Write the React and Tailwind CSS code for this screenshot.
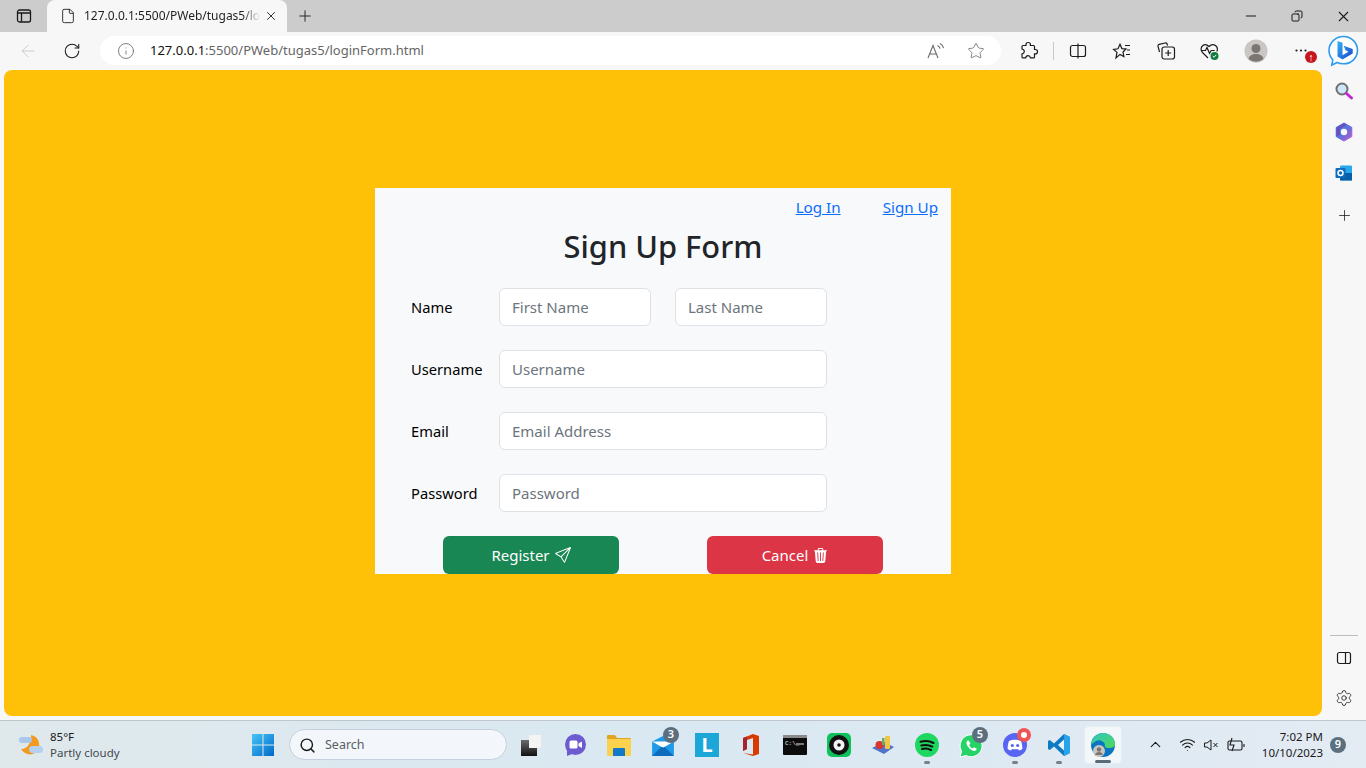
import { BsSend, BsTrash3Fill } from "react-icons/bs";
import {
  ArrowLeft,
  RotateCw,
  Info,
  Star,
  Plus,
  Minus,
  X,
  Copy,
  Settings,
  ChevronUp,
  Wifi,
  Search,
  File,
} from "lucide-react";

function ToolIcon({ className = "", children }) {
  return <div className={`flex shrink-0 items-center justify-center ${className}`}>{children}</div>;
}

function Badge({ children, className = "" }) {
  return (
    <span className={`absolute flex items-center justify-center rounded-full text-[11px] font-semibold text-white ${className}`}>
      {children}
    </span>
  );
}

function Field({ label, children }) {
  return (
    <div className="flex items-center">
      <label className="w-[88px] text-[14.7px] text-black">{label}</label>
      {children}
    </div>
  );
}

function TextInput({ placeholder, className = "w-[328px]" }) {
  return (
    <input
      placeholder={placeholder}
      className={`h-[38px] rounded-md border border-[#dee2e6] bg-white px-3 text-[15px] outline-none placeholder:text-[#6c757d] ${className}`}
    />
  );
}

function ReadAloud() {
  return (
    <svg width="20" height="20" viewBox="0 0 20 20" fill="none" stroke="#6b6b6b" strokeWidth="1.1">
      <path d="M2 17 7 4.500 12 17M3.800 13h6.400" />
      <path d="M11.500 4.500c1.500.7 2.300 1.800 2.600 3.200M14 2.500c2 1 3.200 2.600 3.600 4.700" />
    </svg>
  );
}

function Extensions() {
  return (
    <svg width="20" height="20" viewBox="0 0 20 20" fill="none" stroke="#1c1c1c" strokeWidth="1.2">
      <path d="M7 3.500c0-1.200 1-2 2.200-2s2.200.8 2.200 2v1h3.100a1 1 0 0 1 1 1v3h1c1.200 0 2 1 2 2.200s-.8 2.200-2 2.200h-1v3a1 1 0 0 1-1 1h-3c-.3-1.500-1.300-2.300-2.400-2.300s-2.200.8-2.400 2.300H4a1 1 0 0 1-1-1v-3c1.500-.3 2.300-1.300 2.300-2.400S4.500 8.300 3 8V5.500a1 1 0 0 1 1-1h3Z" />
    </svg>
  );
}

function SplitScreen() {
  return (
    <svg width="18" height="18" viewBox="0 0 18 18" fill="none" stroke="#1c1c1c" strokeWidth="1.2">
      <rect x="1.500" y="3.500" width="15" height="11" rx="2" />
      <path d="M9 1.500v15" />
    </svg>
  );
}

function Favorites() {
  return (
    <svg width="20" height="20" viewBox="0 0 20 20" fill="none" stroke="#1c1c1c" strokeWidth="1.2">
      <path d="M8 3.200 9.900 7.600 14 8 11 11l.9 4.600L8 13.400 4 17l1-5.600L1.600 8.400 6 7.800Z" />
      <path d="M13 4.500h5M15 9h3M14 13.500h4" />
    </svg>
  );
}

function Collections() {
  return (
    <svg width="20" height="20" viewBox="0 0 20 20" fill="none" stroke="#1c1c1c" strokeWidth="1.2">
      <path d="M3.500 11 2 5.200c-.2-.9.3-1.600 1.100-1.800l6-1.400c1-.2 1.700.2 2 1l.4 1.500" />
      <rect x="6" y="6" width="12.500" height="12" rx="2.200" />
      <path d="M12.200 9v6M9.200 12h6" />
    </svg>
  );
}

function Health() {
  return (
    <svg width="22" height="22" viewBox="0 0 22 22" fill="none">
      <path
        d="M9 18 3.500 12.500C1.500 10.500 1.700 7.400 3.600 5.800 5.500 4.200 8 4.500 10 6.500c2-2 4.800-2.300 6.700-.7 1.800 1.500 2 3.800 1.200 5.700"
        stroke="#1c1c1c"
        strokeWidth="1.2"
      />
      <path d="M2.500 10.500h4l1.500-3 2.500 6 1.700-3h3.500" stroke="#1c1c1c" strokeWidth="1.200" />
      <circle cx="15.500" cy="16" r="4" fill="#107c41" />
      <path d="m13.700 16 1.300 1.300 2.200-2.400" stroke="#fff" strokeWidth="1" />
    </svg>
  );
}

function Profile() {
  return (
    <svg width="24" height="24" viewBox="0 0 24 24">
      <circle cx="12" cy="12" r="11.500" fill="#c9c6c3" />
      <circle cx="12" cy="9.500" r="4.500" fill="#7b7672" />
      <path d="M4.500 20c.8-3.500 3.600-5 7.500-5s6.700 1.500 7.500 5a11.500 11.500 0 0 1-15 0Z" fill="#7b7672" />
    </svg>
  );
}

function Bing() {
  return (
    <svg width="32" height="32" viewBox="0 0 32 32">
      <defs>
        <linearGradient id="bingB" x1="0" y1="0" x2="1" y2="1">
          <stop offset="0" stopColor="#33b4f5" />
          <stop offset="1" stopColor="#1a45d0" />
        </linearGradient>
      </defs>
      <path
        d="M16.500 1.500C8.500 1.500 2 7.700 2 15.300c0 3.700 1.400 7 3.800 9.500L4.800 30l5.400-2.500c1.900.9 4 1.300 6.300 1.300 8 0 14-6.100 14-13.500S24.500 1.500 16.500 1.500Z"
        fill="#fff"
        stroke="#2b9cf0"
        strokeWidth="1.600"
      />
      <path d="M10.500 6l5 1.700v12.500l6-3.400-3-1.500-1.800-4.600 9 3.200v4.600l-10.200 6-5-2.900Z" fill="url(#bingB)" />
    </svg>
  );
}

function TitleBar() {
  return (
    <div className="flex h-8 shrink-0 items-end bg-[#cccccc]">
      <ToolIcon className="h-8 w-[47px]">
        <svg width="16" height="16" viewBox="0 0 16 16" fill="none" stroke="#1a1a1a" strokeWidth="1.300">
          <rect x="1.500" y="2" width="13" height="12" rx="2" />
          <path d="M1.500 5h13M5.500 5v9" />
        </svg>
      </ToolIcon>
      <div className="flex h-8 w-[240px] shrink-0 items-center rounded-t-lg bg-[#f7f7f7] pl-[13px]">
        <File size={16} strokeWidth={1.300} color="#1a1a1a" className="shrink-0" />
        <div className="ml-2 w-[176px] shrink-0 overflow-hidden whitespace-nowrap text-[12px] text-[#1f1f1f] [mask-image:linear-gradient(to_right,black_90%,transparent)]">
          127.0.0.1:5500/PWeb/tugas5/loginForm.html
        </div>
        <X size={14} strokeWidth={1.500} color="#1a1a1a" className="ml-1 shrink-0" />
      </div>
      <ToolIcon className="h-8 w-[36px]">
        <Plus size={18} strokeWidth={1.200} color="#1a1a1a" />
      </ToolIcon>
      <div className="ml-auto flex h-8 items-center">
        <ToolIcon className="w-[46px]">
          <Minus size={16} strokeWidth={1.500} color="#1a1a1a" />
        </ToolIcon>
        <ToolIcon className="w-[46px]">
          <Copy size={12} strokeWidth={2} color="#1a1a1a" className="-scale-x-100" />
        </ToolIcon>
        <ToolIcon className="w-[46px]">
          <X size={17} strokeWidth={1.500} color="#1a1a1a" />
        </ToolIcon>
      </div>
    </div>
  );
}

function Toolbar() {
  return (
    <div className="flex h-9 shrink-0 items-center bg-[#f7f7f7] pt-px">
      <ToolIcon className="ml-[6px] w-[44px]">
        <ArrowLeft size={20} strokeWidth={1} color="#c4c4c4" />
      </ToolIcon>
      <ToolIcon className="w-[44px]">
        <RotateCw size={18} strokeWidth={1.400} color="#1a1a1a" />
      </ToolIcon>
      <div className="ml-[6px] flex h-[29px] w-[901px] shrink-0 items-center rounded-full bg-white pl-[17px]">
        <Info size={18} strokeWidth={1.100} color="#666666" />
        <span className="ml-[15px] text-[13px] text-[#666666]">
          <span className="text-[#111111]">127.0.0.1</span>:5500/PWeb/tugas5/loginForm.html
        </span>
        <ToolIcon className="ml-auto w-[40px]">
          <ReadAloud />
        </ToolIcon>
        <ToolIcon className="mr-[5px] w-[40px]">
          <Star size={18} strokeWidth={1.100} color="#6b6b6b" />
        </ToolIcon>
      </div>
      <ToolIcon className="ml-[6px] w-[44px]">
        <Extensions />
      </ToolIcon>
      <div className="ml-[2px] h-[18px] w-px shrink-0 bg-[#c8c8c8]" />
      <ToolIcon className="ml-[2px] w-[44px]">
        <SplitScreen />
      </ToolIcon>
      <ToolIcon className="w-[44px]">
        <Favorites />
      </ToolIcon>
      <ToolIcon className="w-[44px]">
        <Collections />
      </ToolIcon>
      <ToolIcon className="w-[44px]">
        <Health />
      </ToolIcon>
      <ToolIcon className="w-[48px]">
        <Profile />
      </ToolIcon>
      <div className="relative flex h-full w-[40px] shrink-0 items-center justify-center">
        <svg width="12" height="3" viewBox="0 0 12 3" fill="#1c1c1c" className="ml-px">
          <circle cx="1.500" cy="1.500" r="1.100" />
          <circle cx="6" cy="1.500" r="1.100" />
          <circle cx="10.500" cy="1.500" r="1.100" />
        </svg>
        <Badge className="right-[3px] top-[18px] h-3 w-3 bg-[#c4161c] text-[9px] font-bold">↑</Badge>
      </div>
      <ToolIcon className="w-[46px]">
        <Bing />
      </ToolIcon>
    </div>
  );
}

function Form() {
  return (
    <div className="flex h-[386px] w-[576px] flex-col bg-[#f8f9fa] px-9 pt-[7px]">
      <div className="-mr-[23px] flex justify-end gap-[42px] text-[15.200px] leading-6 text-[#0d6efd]">
        <a href="#" className="underline">Log In</a>
        <a href="#" className="underline">Sign Up</a>
      </div>
      <h1 className="mb-[23px] mt-2 text-center text-[30.800px] font-medium leading-[38px] text-[#212529]">
        Sign Up Form
      </h1>
      <div className="flex flex-col gap-6">
        <Field label="Name">
          <div className="flex gap-6">
            <TextInput placeholder="First Name" className="w-[152px]" />
            <TextInput placeholder="Last Name" className="w-[152px]" />
          </div>
        </Field>
        <Field label="Username">
          <TextInput placeholder="Username" />
        </Field>
        <Field label="Email">
          <TextInput placeholder="Email Address" />
        </Field>
        <Field label="Password">
          <TextInput placeholder="Password" />
        </Field>
        <div className="ml-8 flex gap-[88px]">
          <button className="flex h-[38px] w-[176px] items-center justify-center gap-[5px] rounded-md bg-[#198754] text-[15px] text-white">
            Register <BsSend size={16} />
          </button>
          <button className="flex h-[38px] w-[176px] items-center justify-center gap-[5px] rounded-md bg-[#dc3545] text-[15px] text-white">
            Cancel <BsTrash3Fill size={15} />
          </button>
        </div>
      </div>
    </div>
  );
}

function SideBar() {
  return (
    <div className="flex w-[44px] flex-col items-center pb-[13px] pt-[13px]">
      <div className="flex flex-col items-center gap-[21px]">
        <svg width="20" height="20" viewBox="0 0 20 20" fill="none">
          <circle cx="8" cy="8" r="5.500" fill="#cfe6f7" stroke="#6f6f6f" strokeWidth="2" />
          <path d="m12.500 12.500 5 4.500" stroke="#c026d3" strokeWidth="3" strokeLinecap="round" />
        </svg>
        <svg width="20" height="20" viewBox="0 0 20 20">
          <defs>
            <linearGradient id="m365" x1="0" y1="0" x2="1" y2="1">
              <stop offset="0" stopColor="#2aa7e0" />
              <stop offset="0.500" stopColor="#5a6fe0" />
              <stop offset="1" stopColor="#c65bc6" />
            </linearGradient>
          </defs>
          <path d="M10 1 17.800 5.400V14.600L10 19 2.200 14.600V5.400Z" fill="url(#m365)" stroke="url(#m365)" strokeWidth="1" strokeLinejoin="round" />
          <path d="M2.200 5.400 10 1l3 2-7 4v6l-3.800 1.600Z" fill="#6a4fc0" />
          <circle cx="10" cy="10" r="3.200" fill="#f7f7f7" />
        </svg>
        <svg width="20" height="20" viewBox="0 0 20 20">
          <rect x="6" y="2.500" width="12" height="15" rx="1" fill="#28a8ea" />
          <path d="M6 10h12v7.500H6Z" fill="#0a5ea8" />
          <rect x="1.500" y="5" width="10" height="10" rx="1" fill="#0f6cbd" />
          <circle cx="6.500" cy="10" r="2.500" fill="none" stroke="#fff" strokeWidth="1.500" />
        </svg>
        <Plus size={17} strokeWidth={1.100} color="#1c1c1c" className="mt-[3px]" />
      </div>
      <div className="mt-auto h-px w-[28px] bg-[#bdbdbd]" />
      <svg width="16" height="16" viewBox="0 0 16 16" fill="none" stroke="#1c1c1c" strokeWidth="1.200" className="mt-[14px]">
        <rect x="1.500" y="2.500" width="13" height="11" rx="2" />
        <path d="M9.500 2.500v11" />
      </svg>
      <Settings size={18} strokeWidth={1.100} color="#1c1c1c" className="mt-[23px]" />
    </div>
  );
}

function AppSlot({ children, dot, active }) {
  return (
    <div className="relative flex h-[44px] w-[44px] shrink-0 items-center justify-center">
      {active && <span className="absolute inset-[3px] rounded border border-[#e6edf2] bg-[#f2f7fa]" />}
      {active ? <div className="relative flex items-center justify-center">{children}</div> : children}
      {dot && <span className="absolute bottom-[3px] h-[3px] w-[6px] rounded-full bg-[#7a7f85]" />}
      {active && <span className="absolute bottom-[4px] h-[3px] w-[16px] rounded-full bg-[#5a6a78]" />}
    </div>
  );
}

function TaskBar() {
  return (
    <div className="flex h-12 shrink-0 items-center border-t border-[#bfc6cc] bg-gradient-to-r from-[#dfe9ec] via-[#d9e8f2] to-[#e3ebf3]">
      <div className="flex w-[251px] shrink-0 items-center pl-[18px]">
        <svg width="26" height="26" viewBox="0 0 26 26">
          <path d="M13 3a10 10 0 0 1 4 18 10 10 0 0 1-14-4c5 1 11-6 10-14Z" fill="#f39a1f" />
          <rect x="1" y="5" width="13" height="6" rx="3" fill="#a9c8ea" />
          <rect x="11" y="14" width="14" height="7" rx="3.500" fill="#b4d0ee" />
        </svg>
        <div className="ml-[6px] text-[11.500px] leading-4">
          <div className="text-[#1a1a1a]">85°F</div>
          <div className="text-[#454a4f]">Partly cloudy</div>
        </div>
      </div>
      <svg width="24" height="24" viewBox="0 0 24 24" className="shrink-0">
        <defs>
          <linearGradient id="winG" x1="0" y1="0" x2="1" y2="1">
            <stop offset="0" stopColor="#45c6f7" />
            <stop offset="1" stopColor="#0069c8" />
          </linearGradient>
        </defs>
        <path d="M1 1h10.500v10.500H1ZM12.500 1H23v10.500H12.500ZM1 12.500h10.500V23H1ZM12.500 12.500H23V23H12.500Z" fill="url(#winG)" />
      </svg>
      <div className="ml-[14px] flex h-[31px] w-[218px] shrink-0 items-center rounded-full border border-[#c6d0dc] bg-[#f3f6fa] pl-[9px] pt-px text-[12.500px] text-[#5a5f64]">
        <Search size={17} strokeWidth={2} color="#1a1a1a" />
        <span className="ml-[9px]">Search</span>
      </div>
      <div className="ml-[1px] flex shrink-0 items-center">
        <div className="flex h-[44px] w-[45px] items-center justify-center">
          <svg width="22" height="24" viewBox="0 0 22 24">
            <defs>
              <linearGradient id="tvG" x1="0" y1="0" x2="0" y2="1">
                <stop offset="0" stopColor="#6b6b6b" />
                <stop offset="1" stopColor="#111111" />
              </linearGradient>
            </defs>
            <rect x="1" y="7" width="16" height="16" fill="url(#tvG)" />
            <rect x="9" y="2" width="12" height="13" fill="#f4f4f4" />
          </svg>
        </div>
        <AppSlot>
          <svg width="24" height="24" viewBox="0 0 24 24">
            <circle cx="12.500" cy="11.500" r="10.500" fill="#6d5bd0" />
            <path d="M4 16v7l5-2Z" fill="#6d5bd0" />
            <rect x="6.500" y="7.500" width="8" height="8" rx="1.500" fill="#fff" />
            <path d="m15.500 10.500 3.500-2v6.500l-3.500-2Z" fill="#fff" />
          </svg>
        </AppSlot>
        <AppSlot>
          <svg width="24" height="22" viewBox="0 0 24 22">
            <path d="M0 2a1 1 0 0 1 1-1h7l2 3h13a1 1 0 0 1 1 1v2H0Z" fill="#e3a520" />
            <path d="M0 5h24v16a1 1 0 0 1-1 1H1a1 1 0 0 1-1-1Z" fill="#fbd24e" />
            <path d="M6 15a1 1 0 0 1 1-1h10a1 1 0 0 1 1 1v7H6Z" fill="#1478c8" />
          </svg>
        </AppSlot>
        <AppSlot>
          <svg width="24" height="20" viewBox="0 0 24 22" className="mt-[3px]">
            <path d="M0 6 12 0l12 6v16H0Z" fill="#1e9be8" />
            <path d="M0 6h24L12 13Z" fill="#fff" />
            <path d="M0 22 10 12l2 1 2-1 10 10Z" fill="#0f6cbd" />
          </svg>
          <Badge className="right-[6px] top-[4px] h-4 w-4 bg-[#5c6f7e]">3</Badge>
        </AppSlot>
        <AppSlot>
          <div className="flex h-6 w-6 items-center justify-center bg-[#1ca7d8] text-[20px] font-bold leading-none text-white">L</div>
        </AppSlot>
        <AppSlot>
          <svg width="20" height="24" viewBox="0 0 20 24">
            <path d="M2 5 12 1l6 2v18l-6 2-10-3 10 1.500V5L6 7v9l-4 2Z" fill="#d83b01" />
            <path d="M2 5l4-1.500V7v9l-4 2Z" fill="#a4262c" />
          </svg>
        </AppSlot>
        <AppSlot>
          <svg width="24" height="20" viewBox="0 0 24 20">
            <rect width="24" height="20" rx="1" fill="#0c0c0c" />
            <rect width="24" height="3" fill="#8a8a8a" />
            <text x="2" y="10" fontSize="6" fill="#e5e5e5" fontFamily="Liberation Mono, monospace">C:\_</text>
            <rect x="13" y="8.500" width="8" height="1" fill="#e5e5e5" />
          </svg>
        </AppSlot>
        <AppSlot>
          <svg width="24" height="24" viewBox="0 0 24 24">
            <rect width="24" height="24" rx="5" fill="#0dc25b" />
            <circle cx="12" cy="12" r="10" fill="#111111" />
            <circle cx="12" cy="12" r="5.500" fill="#f4f4f4" />
            <circle cx="12" cy="12" r="1.800" fill="#111111" />
          </svg>
        </AppSlot>
        <AppSlot>
          <svg width="24" height="24" viewBox="0 0 24 24">
            <path d="M1 15 13 9l10 5-10 7Z" fill="#4f74c9" />
            <rect x="14" y="3" width="5" height="13" rx="1" fill="#f4c542" />
            <circle cx="8.500" cy="12" r="4" fill="#d9352c" />
            <rect x="11" y="5" width="2.500" height="7" fill="#63b05d" />
          </svg>
        </AppSlot>
        <AppSlot dot>
          <svg width="24" height="24" viewBox="0 0 24 24" fill="none">
            <circle cx="12" cy="12" r="12" fill="#1ed760" />
            <path d="M5.500 8.800c4.500-1.300 9-1 13 1.200M6.300 12.500c3.800-1 7.500-.7 11 1.100M7 16c3.200-.8 6.200-.5 9 1" stroke="#111111" strokeWidth="2" strokeLinecap="round" />
          </svg>
        </AppSlot>
        <AppSlot>
          <svg width="24" height="24" viewBox="0 0 24 24" className="mt-[3px]">
            <path d="M1 23l1.600-5.700A11 11 0 1 1 7 21.500Z" fill="#25d366" stroke="#fff" strokeWidth="1" />
            <path d="M8.500 6.500c-1.500 1-1.500 3 0 5.500s4 4.500 6.500 5c1.500.2 2.500-1 2.800-2.200l-2.800-1.500-1.200 1.300c-1.500-.6-3-2.200-3.600-3.700l1.200-1.200L9.900 6.800Z" fill="#fff" />
          </svg>
          <Badge className="right-[5px] top-[4px] h-4 w-4 bg-[#5c6f7e]">5</Badge>
        </AppSlot>
        <AppSlot dot>
          <svg width="24" height="24" viewBox="0 0 24 24">
            <circle cx="12" cy="12" r="12" fill="#5865f2" />
            <path d="M6 8c3.500-1.800 8.500-1.800 12 0 1 2.500 1.500 5.500 1.300 8-1 .8-2.200 1.300-3.300 1.500l-1-1.600c-1.800.5-4.200.5-6 0l-1 1.600C6.900 17.300 5.700 16.800 4.700 16 4.500 13.500 5 10.500 6 8Z" fill="#fff" />
            <circle cx="9.300" cy="12.500" r="1.600" fill="#5865f2" />
            <circle cx="14.700" cy="12.500" r="1.600" fill="#5865f2" />
          </svg>
          <span className="absolute right-[6px] top-[5px] flex h-[14px] w-[14px] items-center justify-center rounded-full bg-[#f05555]">
            <span className="h-[6px] w-[6px] rounded-full bg-white" />
          </span>
        </AppSlot>
        <AppSlot dot>
          <svg width="24" height="24" viewBox="0 0 24 24">
            <path d="M17 1 23 4v16l-6 3L7 13.500 2.800 17 1 16V8l1.800-1L7 10.500Z" fill="#0e7ac4" />
            <path d="M17 6.500 11 12l6 5.500Z" fill="#e6f3fb" />
            <path d="M17 1 23 4v16l-6 3Z" fill="#29a3ea" />
          </svg>
        </AppSlot>
        <AppSlot active>
          <svg width="26" height="26" viewBox="0 0 26 26">
            <defs>
              <linearGradient id="edgeG" x1="0" y1="0" x2="1" y2="1">
                <stop offset="0" stopColor="#2fc8c0" />
                <stop offset="1" stopColor="#4fd85a" />
              </linearGradient>
            </defs>
            <circle cx="13" cy="13" r="12" fill="#0c75c2" />
            <path d="M1 13C2 5 8 1 13 1c7 0 12 5 12 11 0 3-3 4-6 4-3.500 0-5-1.500-4-3.500C14 9 9 7 6 9c-2 1.300-4 2.500-5 4Z" fill="url(#edgeG)" />
            <circle cx="9" cy="19" r="6" fill="#c9c6c3" />
            <circle cx="9" cy="17.500" r="2.200" fill="#7b7672" />
            <path d="M5 23c.5-2 2-3 4-3s3.500 1 4 3Z" fill="#7b7672" />
          </svg>
        </AppSlot>
      </div>
      <div className="ml-[22px] flex shrink-0 items-center">
        <ChevronUp size={17} strokeWidth={1.600} color="#1a1a1a" />
        <Wifi size={17} strokeWidth={1.500} color="#1a1a1a" className="ml-[15px]" />
        <svg width="16" height="16" viewBox="0 0 16 16" fill="none" stroke="#1a1a1a" strokeWidth="1" className="ml-[7px]">
          <path d="M1.500 6v4h2.500L8 13V3L4 6ZM10.500 6l4 4M14.500 6l-4 4" />
        </svg>
        <svg width="20" height="16" viewBox="0 0 20 16" fill="none" stroke="#1a1a1a" strokeWidth="1.100" className="ml-[7px]">
          <rect x="2" y="4" width="14" height="9" rx="1.500" />
          <path d="M18 7v3M6 1 4 8h4l-2 6" />
        </svg>
      </div>
      <div className="ml-auto mr-5 flex items-center">
        <div className="text-right text-[11.500px] leading-[16px] text-[#1a1a1a]">
          <div>7:02 PM</div>
          <div>10/10/2023</div>
        </div>
        <span className="ml-[7px] flex h-4 w-4 items-center justify-center rounded-full bg-[#5c6f7e] text-[11px] font-semibold text-white">9</span>
      </div>
    </div>
  );
}

export default function App() {
  return (
    <div className="flex h-[768px] w-[1366px] flex-col overflow-hidden bg-[#f7f7f7] font-['Noto_Sans','Open_Sans',sans-serif]">
      <TitleBar />
      <Toolbar />
      <div className="flex min-h-0 flex-1 pl-1">
        <div className="mb-1 mt-[2px] flex w-[1318px] justify-center rounded-lg bg-[#ffc107] pt-[118px]">
          <Form />
        </div>
        <SideBar />
      </div>
      <TaskBar />
    </div>
  );
}
